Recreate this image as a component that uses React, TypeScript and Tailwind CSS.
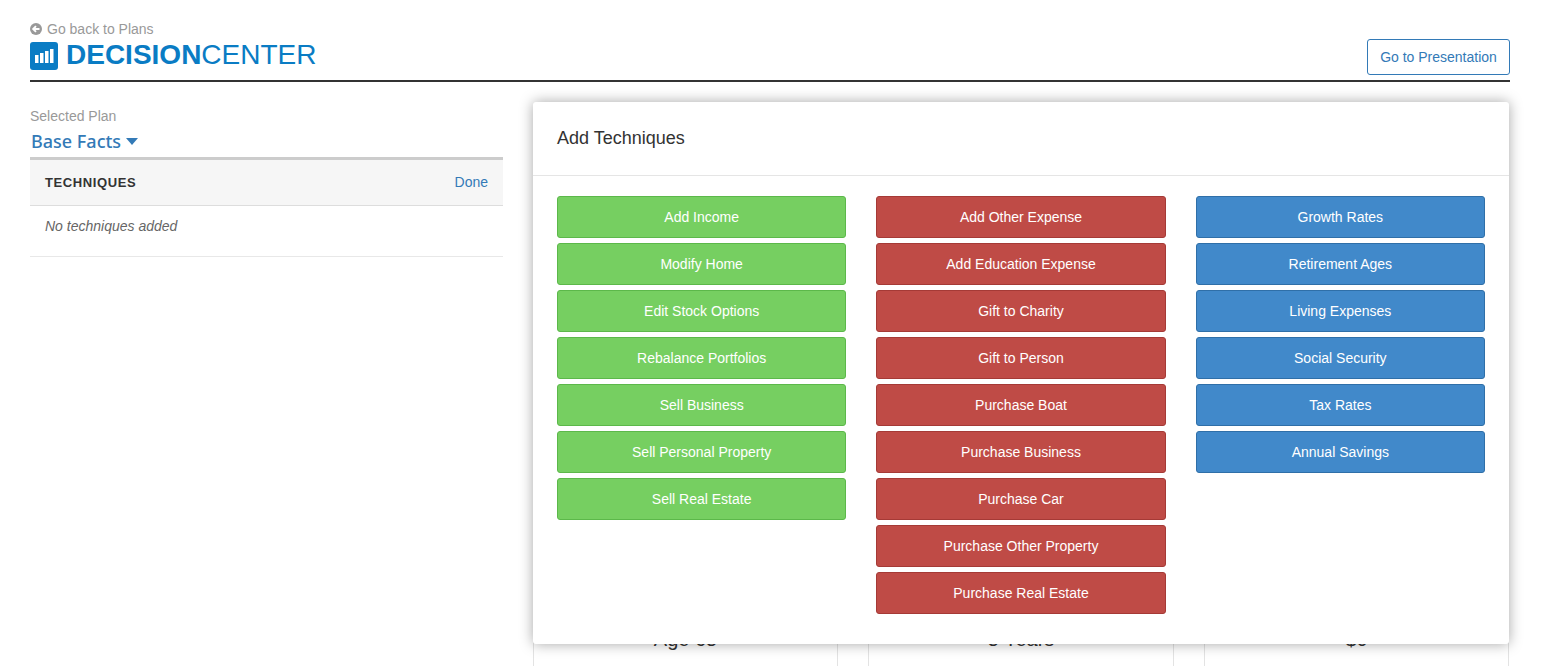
const greenItems = ['Add Income', 'Modify Home', 'Edit Stock Options', 'Rebalance Portfolios', 'Sell Business', 'Sell Personal Property', 'Sell Real Estate'];
const redItems = ['Add Other Expense', 'Add Education Expense', 'Gift to Charity', 'Gift to Person', 'Purchase Boat', 'Purchase Business', 'Purchase Car', 'Purchase Other Property', 'Purchase Real Estate'];
const blueItems = ['Growth Rates', 'Retirement Ages', 'Living Expenses', 'Social Security', 'Tax Rates', 'Annual Savings'];

function TechniqueColumn({ items, className }: { items: string[]; className: string }) {
  return (
    <div className="flex flex-col gap-[5px]">
      {items.map((item) => (
        <button key={item} type="button" className={`h-[42px] w-full rounded-[3px] border text-center text-[14px] text-white ${className}`}>
          {item}
        </button>
      ))}
    </div>
  );
}

function SummaryCard({ label, className }: { label: string; className: string }) {
  return (
    <div className={`flex h-[40px] justify-center border-x border-[#e3e3e3] text-[20px] leading-[22px] text-[#333] ${className}`}>
      {label}
    </div>
  );
}

export default function App() {
  return (
    <div className="h-[666px] overflow-hidden bg-white pl-[30px] pr-[33px] font-['Liberation_Sans',Arial,sans-serif] text-[14px] text-[#333]">
      {/* Header */}
      <div className="flex h-[82px] items-end justify-between border-b-2 border-[#333] pb-[5px]">
        <div>
          <div className="flex h-[20px] items-center gap-[5px] text-[#999]">
            <svg className="h-[12px] w-[12px]" viewBox="0 0 12 12">
              <circle cx="6" cy="6" r="6" fill="#999" />
              <path d="M9.5 6H3.6M6 3.2 3.2 6 6 8.8" fill="none" stroke="#fff" strokeWidth="1.9" />
            </svg>
            <span>Go back to Plans</span>
          </div>
          <div className="mb-[5px] mt-[3px] flex h-[28px] items-center gap-[8px]">
            <svg className="h-[28px] w-[28px]" viewBox="0 0 28 28">
              <rect width="28" height="28" rx="3" fill="#0a7cc4" />
              <rect x="5" y="13" width="3.5" height="8" fill="#fff" />
              <rect x="10" y="11" width="3.5" height="10" fill="#fff" />
              <rect x="15" y="9" width="3.5" height="12" fill="#fff" />
              <rect x="20" y="7" width="3.5" height="14" fill="#fff" />
            </svg>
            <span className="mb-[2px] text-[28px] leading-[28px] text-[#0a7cc4]">
              <b>DECISION</b>CENTER
            </span>
          </div>
        </div>
        <button type="button" className="h-[36px] w-[143px] rounded-[3px] border border-[#337ab7] text-[14px] text-[#337ab7]">
          Go to Presentation
        </button>
      </div>

      <div className="flex gap-[30px]">
        {/* Left column */}
        <div className="w-[473px] shrink-0 pt-[26px]">
          <div className="text-[14px] leading-[16px] text-[#999]">Selected Plan</div>
          <div className="mt-[3px] flex h-[30px] items-center gap-[5px] pb-[2px] pl-px font-['Noto_Sans',sans-serif] text-[18px] font-medium text-[#337ab7]">
            <span>Base Facts</span>
            <svg className="h-[7px] w-[12px]" viewBox="0 0 12 7">
              <path d="M0 0H12L6 7Z" fill="#337ab7" />
            </svg>
          </div>
          <div className="flex h-[49px] items-center justify-between border-y border-t-[3px] border-[#ddd] border-t-[#ccc] bg-[#f6f6f6] px-[15px]">
            <span className="text-[13px] font-bold tracking-[0.6px] text-[#333]">TECHNIQUES</span>
            <span className="text-[#337ab7]">Done</span>
          </div>
          <div className="h-[51px] border-b border-[#e8e8e8] px-[15px] pt-[12px] italic leading-[17px] text-[#666]">
            No techniques added
          </div>
        </div>

        {/* Right column */}
        <div className="relative min-w-0 flex-1 pr-px">
          <div className="mt-[546px] flex gap-[30px]">
            <SummaryCard label="Age 65" className="w-[305px]" />
            <SummaryCard label="5 Years" className="w-[306px]" />
            <SummaryCard label="$0" className="flex-1" />
          </div>

          {/* Add Techniques popover */}
          <div className="absolute left-0 right-px top-[20px] h-[542px] rounded-[3px] bg-white shadow-[0_0_14px_rgba(0,0,0,0.35)]">
            <div className="flex h-[74px] items-center border-b border-[#e5e5e5] px-[24px] text-[18px]">
              Add Techniques
            </div>
            <div className="grid grid-cols-3 gap-[30px] px-[24px] pt-[20px]">
              <TechniqueColumn items={greenItems} className="border-[#5cb84a] bg-[#76cf61]" />
              <TechniqueColumn items={redItems} className="border-[#a53a36] bg-[#bf4b46]" />
              <TechniqueColumn items={blueItems} className="border-[#2f6fa8] bg-[#4189ca]" />
            </div>
          </div>
        </div>
      </div>
    </div>
  );
}
